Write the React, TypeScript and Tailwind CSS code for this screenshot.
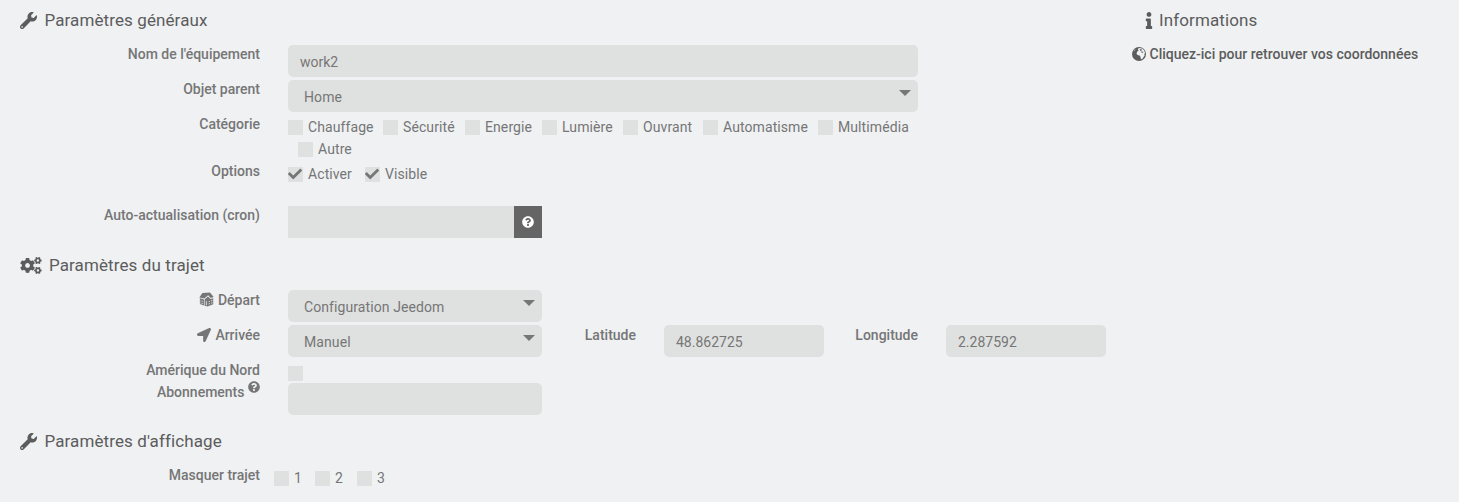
import React from "react";
import { FaWrench, FaCogs, FaInfo, FaLocationArrow, FaQuestionCircle, FaCheck } from "react-icons/fa";

function House({ className = "" }: { className?: string }) {
  return (
    <svg viewBox="0 0 15 15" className={className} fill="currentColor">
      <path d="M3.4.9 11 .5l3.7 4.6-3 .9-2.6-2.7L5.3 6.6.3 5.4z" />
      <path d="M8.9 4.4 11.6 7l2.6-.7v6l-5.6 2.2-3-.8V7.6z" />
      <path d="M.9 6.3l4.1 1.1v6L.9 12z" />
      <path d="M1.5 8.8l1 .3M3.3 9.2l1 .3M1.5 10.9l1 .3M3.3 11.4l1 .3M9.7 9.7l1.2-.4M12.1 8.9l1.3-.4M9.7 12l1.2-.4M12.1 11.2l1.3-.4" stroke="#eff1f3" strokeWidth=".9" />
      <path d="M7.4 9.2v4.2" stroke="#eff1f3" strokeWidth=".8" />
    </svg>
  );
}

function Globe({ className = "" }: { className?: string }) {
  return (
    <svg viewBox="0 0 14 14" className={className}>
      <circle cx="7" cy="7" r="7" fill="currentColor" />
      <path d="M6.2 1.5 8 .9l2.6.8 1.6 1.9.9 2.3-.7.9.2 1.6-1.3 2-1.2 1.8-1.2-.2-.5-2.2-.8-1.4-2-.4L4.500 6.400l.7-1.800 1.500-.9-.9-.9z" fill="#eff1f3" />
      <path d="M7.600 2.400l1.700-.3.700 1.200-1.500.6zM8.500 4.700l2.200-.2.800 1.100-1.500.2z" fill="currentColor" />
      <path d="M1.300 4.300 2.600 2.400l1 .1-.9 1.300z" fill="#eff1f3" opacity=".6" />
    </svg>
  );
}

function Heading({ icon, children, className = "" }: { icon: React.ReactNode; children: React.ReactNode; className?: string }) {
  return (
    <h2 className={`flex h-6 items-center text-[17px] tracking-[0.1px] text-[#5c5c5c] ${className}`}>
      {icon}
      <span>{children}</span>
    </h2>
  );
}

function Row({ label, className = "", children }: { label: React.ReactNode; className?: string; children?: React.ReactNode }) {
  return (
    <div className={`flex items-start ${className}`}>
      <label className="flex h-5 w-[260px] shrink-0 items-center justify-end font-medium">{label}</label>
      {children}
    </div>
  );
}

function Box({ checked = false, label, className = "" }: { checked?: boolean; label?: string; className?: string }) {
  return (
    <span className={`flex h-[22px] items-center ${className}`}>
      <span className="flex size-[15px] shrink-0 items-center bg-[#dfe1e0]">
        {checked && <FaCheck className="size-[14px] shrink-0" />}
      </span>
      {label && <span className="ml-[5px] whitespace-nowrap tracking-[0.09px]">{label}</span>}
    </span>
  );
}

function Field({ value = "", className = "" }: { value?: string; className?: string }) {
  return <div className={`flex h-8 items-center bg-[#dfe1e0] px-3 pt-[2px] ${className}`}>{value}</div>;
}

function Select({ value, className = "" }: { value: string; className?: string }) {
  return (
    <div className={`flex h-8 justify-between rounded-[5px] bg-[#dfe1e0] pr-[7px] pl-4 ${className}`}>
      <span className="self-center pt-[2px] tracking-[0.09px]">{value}</span>
      <svg viewBox="0 0 12 6" className="mt-[10px] h-[6px] w-[12px]" fill="currentColor">
        <path d="M0 0h12L6 6z" />
      </svg>
    </div>
  );
}

export default function App() {
  return (
    <main className="flex h-[502px] w-[1459px] overflow-hidden bg-[#eff1f3] font-['Roboto',sans-serif] text-[14px] leading-5 text-[#767676]">
      <section className="w-[1132px] shrink-0 pt-2">
        <Heading className="ml-5" icon={<FaWrench className="mr-[7.5px] size-[17px]" />}>Paramètres généraux</Heading>
        <Row className="mt-3 h-[35px]" label="Nom de l'équipement">
          <Field className="mt-px ml-7 w-[630px] rounded-[5px]" value="work2" />
        </Row>
        <Row className="h-[35px]" label="Objet parent">
          <Select className="mt-px ml-7 w-[630px]" value="Home" />
        </Row>
        <Row className="h-[47px]" label="Catégorie">
          <div className="ml-7 pt-[2px]">
            <div className="flex">
              <Box className="w-[95px]" label="Chauffage" />
              <Box className="w-[82px]" label="Sécurité" />
              <Box className="w-[77px]" label="Energie" />
              <Box className="w-[81px]" label="Lumière" />
              <Box className="w-[80px]" label="Ouvrant" />
              <Box className="w-[115px]" label="Automatisme" />
              <Box label="Multimédia" />
            </div>
            <Box className="ml-[10px]" label="Autre" />
          </div>
        </Row>
        <Row className="h-[44px]" label="Options">
          <div className="ml-7 flex pt-[2px]">
            <Box className="w-[77px]" checked label="Activer" />
            <Box checked label="Visible" />
          </div>
        </Row>
        <Row className="h-[48px]" label="Auto-actualisation (cron)">
          <div className="mt-px ml-7 flex">
            <Field className="w-[226px]" />
            <div className="flex h-8 w-7 items-center justify-center bg-[#656565] pb-px text-white">
              <FaQuestionCircle className="size-3" />
            </div>
          </div>
        </Row>

        <Heading className="ml-5" icon={<FaCogs className="mr-[7px] h-[17px] w-[22px]" />}>Paramètres du trajet</Heading>
        <Row className="mt-[13px] h-[35px]" label={<><House className="mr-1 mb-[2px] size-[15px]" />Départ</>}>
          <Select className="ml-7 w-[254px]" value="Configuration Jeedom" />
        </Row>
        <Row className="h-[35px]" label={<><FaLocationArrow className="mr-1 size-[14px]" />Arrivée</>}>
          <Select className="ml-7 w-[254px]" value="Manuel" />
          <label className="w-[94px] text-right font-medium">Latitude</label>
          <Field className="ml-7 w-[160px] rounded-[5px]" value="48.862725" />
          <label className="w-[94px] text-right font-medium">Longitude</label>
          <Field className="ml-7 w-[160px] rounded-[5px]" value="2.287592" />
        </Row>
        <Row className="h-[22px]" label="Amérique du Nord">
          <Box className="mt-[2px] ml-7" />
        </Row>
        <Row className="h-[47px]" label={<>Abonnements<FaQuestionCircle className="mb-[11px] ml-[3.5px] size-3" /></>}>
          <Field className="mt-px ml-7 w-[254px] rounded-[5px]" />
        </Row>

        <Heading className="ml-5" icon={<FaWrench className="mr-[7.5px] size-[17px]" />}>Paramètres d'affichage</Heading>
        <Row className="mt-3" label="Masquer trajet">
          <div className="ml-[14px] flex pt-[2px]">
            <Box className="w-[41px]" label="1" />
            <Box className="w-[42px]" label="2" />
            <Box label="3" />
          </div>
        </Row>
      </section>

      <aside className="pt-2 text-[#5c5c5c]">
        <Heading className="ml-[13px]" icon={<FaInfo className="mr-[6px] h-[17px] w-[8px]" />}>Informations</Heading>
        <a className="mt-3 flex h-5 items-center font-medium">
          <Globe className="mr-[3.500px] mb-px size-[14px]" />
          Cliquez-ici pour retrouver vos coordonnées
        </a>
      </aside>
    </main>
  );
}
